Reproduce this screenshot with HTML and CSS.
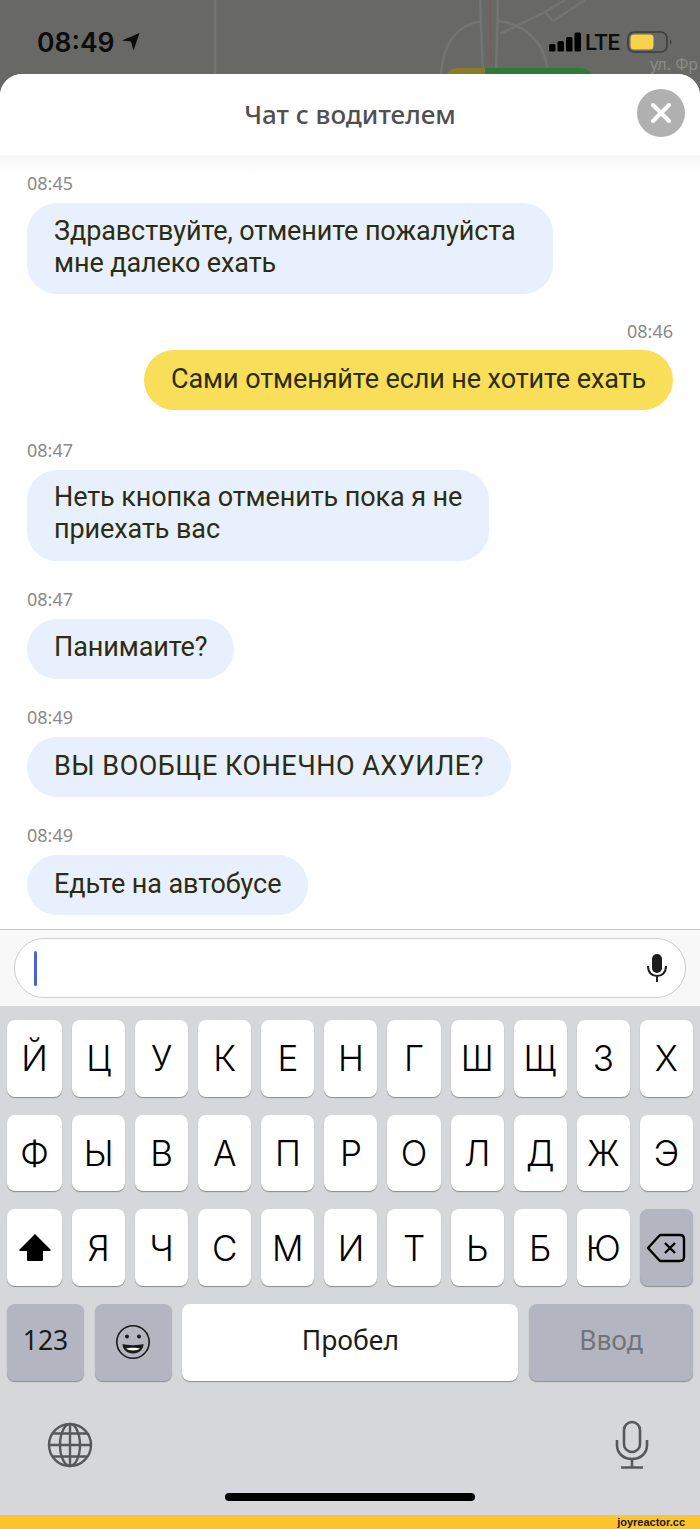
FILE: index.html
```html
<!DOCTYPE html>
<html lang="ru">
<head>
    <meta charset="UTF-8">
    <meta name="viewport" content="width=device-width, initial-scale=1.0">
    <title>Чат с водителем</title>
    <link rel="stylesheet" href="styles.css">
</head>
<body>

<div class="phone">
    <!-- Status bar over the dimmed map -->
    <div class="status-bar">
        <svg class="map" width="700" height="74" viewBox="0 0 700 74">
            <g fill="none" stroke="#747472" stroke-width="2.5">
                <path d="M215 0V74"/>
                <path d="M480 0L483 74M498 0L496 74"/>
                <path d="M441 74C443 40 460 24 482 21M498 21C525 24 546 42 548 74"/>
                <path d="M500 34L545 12L565 0M553 21L585 0"/>
                <path d="M545 12L553 21"/>
            </g>
            <path d="M490 0L491 66" stroke="#7c5a58" stroke-width="1.5"/>
            <path d="M447 74C449 70 452 68 460 68H485V74Z" fill="#8a7a2c"/>
            <path d="M485 68H578C586 68 590 71 592 74H485Z" fill="#2f7a38"/>
            <text x="650" y="70" class="street">ул. Фр</text>
        </svg>
        <div class="clock">
            <span>08:49</span>
            <svg width="18" height="18" viewBox="0 0 18 18"><path d="M0 7.5L17.5 0L11.5 17.5L9 8.5Z" fill="#0c0c0c"/></svg>
        </div>
        <div class="indicators">
            <svg width="32" height="20" viewBox="0 0 32 20">
                <rect x="0" y="12" width="6.5" height="7.5" rx="1.5"/>
                <rect x="8.5" y="9" width="6.5" height="10.5" rx="1.5"/>
                <rect x="17" y="5" width="6.5" height="14.5" rx="1.5"/>
                <rect x="25.5" y="0.5" width="6.5" height="19" rx="1.5"/>
            </svg>
            <span class="lte">LTE</span>
            <svg class="battery" width="46" height="22" viewBox="0 0 46 22">
                <rect x="1" y="1" width="39" height="20" rx="6" fill="none" stroke="#3c3c3c" stroke-width="1.6"/>
                <rect x="3.5" y="3.5" width="23" height="15" rx="3.5" fill="#f8d24a"/>
                <path d="M43 8.5C45 9.5 45 12.5 43 13.5Z" fill="#3c3c3c"/>
            </svg>
        </div>
    </div>

    <div class="sheet">
        <header class="sheet-head">
            <h1>Чат с водителем</h1>
            <button class="close">
                <svg width="24" height="24" viewBox="0 0 24 24"><path d="M4 4L20 20M20 4L4 20" stroke="#fff" stroke-width="4" stroke-linecap="round"/></svg>
            </button>
        </header>

        <!-- Messages -->
        <div class="chat">
            <div class="msg">
                <div class="time">08:45</div>
                <div class="bubble wide">Здравствуйте, отмените пожалуйста<br>мне далеко ехать</div>
            </div>
            <div class="msg mine">
                <div class="time">08:46</div>
                <div class="bubble">Сами отменяйте если не хотите ехать</div>
            </div>
            <div class="msg">
                <div class="time">08:47</div>
                <div class="bubble mid">Неть кнопка отменить пока я не<br>приехать вас</div>
            </div>
            <div class="msg">
                <div class="time">08:47</div>
                <div class="bubble">Панимаите?</div>
            </div>
            <div class="msg">
                <div class="time">08:49</div>
                <div class="bubble caps">ВЫ ВООБЩЕ КОНЕЧНО АХУИЛЕ?</div>
            </div>
            <div class="msg">
                <div class="time">08:49</div>
                <div class="bubble">Едьте на автобусе</div>
            </div>
        </div>

        <div class="input-bar">
            <div class="field">
                <span class="caret"></span>
                <svg width="20" height="28" viewBox="0 0 20 28">
                    <rect x="5" y="0" width="10" height="19" rx="5" fill="#1c1c1c"/>
                    <path d="M1 12C1 18.5 5 22 10 22C15 22 19 18.5 19 12M10 22V28" fill="none" stroke="#1c1c1c" stroke-width="2"/>
                </svg>
            </div>
        </div>
    </div>

    <!-- Keyboard -->
    <div class="keyboard">
        <div class="key-row">
            <div class="key">Й</div><div class="key">Ц</div><div class="key">У</div><div class="key">К</div><div class="key">Е</div><div class="key">Н</div><div class="key">Г</div><div class="key">Ш</div><div class="key">Щ</div><div class="key">З</div><div class="key">Х</div>
        </div>
        <div class="key-row">
            <div class="key">Ф</div><div class="key">Ы</div><div class="key">В</div><div class="key">А</div><div class="key">П</div><div class="key">Р</div><div class="key">О</div><div class="key">Л</div><div class="key">Д</div><div class="key">Ж</div><div class="key">Э</div>
        </div>
        <div class="key-row">
            <div class="key">
                <svg width="32" height="29" viewBox="0 0 32 29"><path d="M16 1L31.5 16.5C32 17.3 31.5 18 30.5 18H24V26.5C24 27.5 23.3 28 22.5 28H9.5C8.7 28 8 27.5 8 26.5V18H1.5C.5 18 0 17.3 .5 16.5Z" fill="#000"/></svg>
            </div>
            <div class="key">Я</div><div class="key">Ч</div><div class="key">С</div><div class="key">М</div><div class="key">И</div><div class="key">Т</div><div class="key">Ь</div><div class="key">Б</div><div class="key">Ю</div>
            <div class="key dark">
                <svg width="40" height="30" viewBox="0 0 40 30" fill="none" stroke="#000" stroke-width="2.4" stroke-linejoin="round"><path d="M14 2H34C36.5 2 38 3.5 38 6V24C38 26.5 36.5 28 34 28H14L2 15Z"/><path d="M19 10L29 20M29 10L19 20"/></svg>
            </div>
        </div>
        <div class="key-row bottom">
            <div class="key dark small">123</div>
            <div class="key dark">
                <svg width="36" height="36" viewBox="0 0 36 36">
                    <circle cx="18" cy="18" r="16.2" fill="none" stroke="#1a1a1a" stroke-width="1.6"/>
                    <circle cx="12" cy="12.5" r="2" fill="#1a1a1a"/>
                    <circle cx="24" cy="12.5" r="2" fill="#1a1a1a"/>
                    <path d="M7.5 20C12 21.5 24 21.5 28.5 20C28.5 25.5 24 29.5 18 29.5C12 29.5 7.5 25.5 7.5 20Z" fill="#1a1a1a"/>
                    <path d="M11 24.5C15 23.4 21 23.4 25 24.5C23 27 13 27 11 24.5Z" fill="#fff"/>
                </svg>
            </div>
            <div class="key small">Пробел</div>
            <div class="key dark small enter">Ввод</div>
        </div>
        <div class="system-row">
            <svg width="46" height="46" viewBox="0 0 46 46" fill="none" stroke="#55585c" stroke-width="2.4">
                <circle cx="23" cy="23" r="21"/>
                <ellipse cx="23" cy="23" rx="10" ry="21"/>
                <path d="M23 2V44M2 23H44M6 11.5H40M6 34.5H40"/>
            </svg>
            <svg width="34" height="50" viewBox="0 0 34 50" fill="none" stroke="#55585c" stroke-width="2.6">
                <rect x="9" y="2" width="16" height="30" rx="8"/>
                <path d="M2 20V25C2 33 8 39 17 39C26 39 32 33 32 25V20M17 39V47M6 47.5H28"/>
            </svg>
        </div>
        <div class="home-indicator"></div>
    </div>

    <footer class="site-strip">joyreactor.cc</footer>
</div>

</body>
</html>
```

FILE: styles.css
```css
* {
    box-sizing: border-box;
}
html, body {
    margin: 0;
    padding: 0;
}
body {
    font-family: Roboto, Arial, sans-serif;
    background-color: #686866;
}
.phone {
    position: relative;
    width: 700px;
    height: 1529px;
    overflow: hidden;
    display: flex;
    flex-direction: column;
}
.status-bar {
    position: relative;
    height: 74px;
    flex: none;
    display: flex;
    justify-content: space-between;
    align-items: flex-start;
    padding: 25px 27px 0 37px;
}
.map {
    position: absolute;
    left: 0;
    top: 0;
}
.street {
    font-family: "Noto Sans", sans-serif;
    font-size: 16px;
    fill: #8c8c8a;
}
.clock {
    position: relative;
    display: flex;
    align-items: center;
    gap: 7px;
    height: 34px;
    font-family: Inter, sans-serif;
    font-size: 26.5px;
    font-weight: 600;
    color: #0c0c0c;
}
.indicators {
    position: relative;
    display: flex;
    align-items: center;
    gap: 4px;
    height: 34px;
}
.lte {
    font-family: Roboto, sans-serif;
    font-size: 22px;
    font-weight: 500;
    color: #0c0c0c;
}
.battery {
    margin-left: 3px;
}
.sheet {
    position: relative;
    flex: none;
    height: 932px;
    background-color: #fff;
    border-radius: 22px 22px 0 0;
    display: flex;
    flex-direction: column;
}
.sheet-head {
    height: 81px;
    flex: none;
    display: flex;
    align-items: center;
    justify-content: center;
    background: #fff;
    border-radius: 22px 22px 0 0;
    position: relative;
}
.sheet-head::after {
    content: "";
    position: absolute;
    left: 0;
    right: 0;
    top: 81px;
    height: 20px;
    background: linear-gradient(#f6f6f6, #fff);
}
.sheet-head h1 {
    margin: 0 0 1px;
    font-family: "Noto Sans", sans-serif;
    font-size: 26px;
    font-weight: 500;
    color: #505050;
}
.close {
    position: absolute;
    right: 15px;
    top: 15px;
    width: 48px;
    height: 48px;
    padding: 0;
    border: none;
    border-radius: 50%;
    background-color: #b0b0b0;
    display: flex;
    align-items: center;
    justify-content: center;
}
.chat {
    position: relative;
    flex: 1;
    min-height: 0;
    padding: 17px 27px 0;
    display: flex;
    flex-direction: column;
    gap: 27.2px;
}
.msg {
    display: flex;
    flex-direction: column;
    align-items: flex-start;
}
.msg.mine {
    align-items: flex-end;
    margin: -1.2px 0 1.5px;
}
.time {
    height: 22px;
    line-height: 22px;
    margin-bottom: 9px;
    font-family: "Noto Sans", sans-serif;
    font-size: 18px;
    color: #8a8a8a;
}
.mine .time {
    margin-bottom: 8px;
}
.bubble {
    padding: 12.5px 27px 15.5px;
    line-height: 32px;
    font-size: 27px;
    letter-spacing: -0.1px;
    color: #2c2c10;
    background-color: #e7f0fc;
    border-radius: 30px;
}
.bubble.wide {
    width: 526px;
    padding: 11.5px 20px 15.5px 27px;
}
.bubble.mid {
    width: 462px;
    padding: 11.5px 20px 15.5px 27px;
}
.bubble.caps {
    letter-spacing: 0.5px;
}
.mine .bubble {
    background-color: #f9de5a;
}
.input-bar {
    height: 77px;
    flex: none;
    padding: 8px 14px 0;
    background-color: #f8f8f8;
    border-top: 1px solid #c4c4c4;
}
.field {
    height: 60px;
    padding: 0 18px 0 19px;
    display: flex;
    align-items: center;
    justify-content: space-between;
    background-color: #fff;
    border: 1px solid #cfcfcf;
    border-radius: 30px;
}
.caret {
    width: 3px;
    height: 35px;
    border-radius: 2px;
    background-color: #4a63d8;
}
.keyboard {
    position: relative;
    flex: 1;
    background-color: #d5d7db;
    padding: 14px 7px 0;
    display: flex;
    flex-direction: column;
    gap: 18px;
}
.key-row {
    display: grid;
    grid-template-columns: 55px repeat(10, 1fr);
    gap: 10px;
}
.key-row.bottom {
    grid-template-columns: 77px 77px 336px 164px;
    gap: 10.7px;
}
.key {
    height: 76.7px;
    display: flex;
    align-items: center;
    justify-content: center;
    background-color: #fff;
    border-radius: 8px;
    box-shadow: 0 1px 1px #8a8b8e;
    font-family: Inter, sans-serif;
    font-size: 35px;
    font-weight: 350;
    color: #000;
}
.key.dark {
    background-color: #b3b6c0;
}
.key.small {
    padding-bottom: 5px;
    font-family: "Noto Sans", sans-serif;
    font-size: 26.5px;
    font-weight: 400;
    color: #1a1a1a;
}
.key.enter {
    color: #70737c;
}
.system-row {
    display: flex;
    justify-content: space-between;
    align-items: center;
    padding: 0 44px 0 40px;
    margin-top: 21px;
}
.home-indicator {
    position: absolute;
    left: 225px;
    bottom: 14px;
    width: 250px;
    height: 8px;
    border-radius: 4px;
    background-color: #000;
}
.site-strip {
    height: 14px;
    flex: none;
    padding-right: 15px;
    text-align: right;
    line-height: 14px;
    font-family: "Liberation Sans", sans-serif;
    font-size: 11px;
    font-weight: 700;
    color: #1a1a1a;
    background-color: #fdc42e;
}
```
